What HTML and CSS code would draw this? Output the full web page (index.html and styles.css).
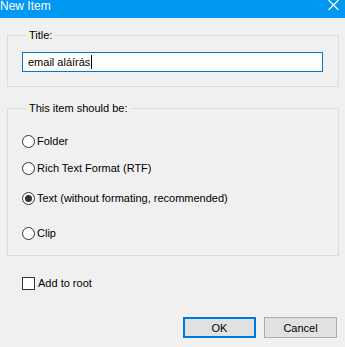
FILE: index.html
```html
<!DOCTYPE html>
<html lang="en">
<head>
    <meta charset="UTF-8">
    <meta name="viewport" content="width=device-width, initial-scale=1.0">
    <title>New Item</title>
    <link rel="stylesheet" href="styles.css">
</head>
<body>
    <div class="dialog">
        <div class="titlebar">
            <span class="title">New Item</span>
            <svg class="close" width="11" height="10" viewBox="0 0 11 10">
                <path d="M0.5 0 L10.5 10 M10.5 0 L0.5 10" stroke="#fff" stroke-width="1.2" fill="none"/>
            </svg>
        </div>

        <div class="content">
            <fieldset class="group group-title">
                <legend>Title:</legend>
                <div class="textbox">
                    <span>email aláírás</span><span class="caret"></span>
                </div>
            </fieldset>

            <fieldset class="group group-type">
                <legend>This item should be:</legend>
                <label class="option opt-folder"><span class="radio"></span>Folder</label>
                <label class="option opt-rtf"><span class="radio"></span>Rich Text Format (RTF)</label>
                <label class="option opt-text"><span class="radio checked"></span>Text (without formating, recommended)</label>
                <label class="option opt-clip"><span class="radio"></span>Clip</label>
            </fieldset>

            <label class="option add-root"><span class="checkbox"></span>Add to root</label>

            <div class="buttons">
                <button class="btn btn-default">OK</button>
                <button class="btn">Cancel</button>
            </div>
        </div>
    </div>
</body>
</html>
```

FILE: styles.css
```css
* {
    box-sizing: border-box;
    margin: 0;
    padding: 0;
}
html, body {
    width: 345px;
    height: 347px;
    overflow: hidden;
}
body {
    font-family: 'Liberation Sans', Arial, sans-serif;
    font-size: 11px;
    color: #000;
    background: #f0f0f0;
}
.titlebar {
    height: 18px;
    background: #0098f0;
    color: #fff;
    display: flex;
    justify-content: space-between;
    align-items: flex-start;
    padding-right: 6px;
}
.title {
    line-height: 13px;
    font-size: 12px;
}
.close {
    display: block;
}
.content {
    padding: 0 6px 0 7px;
}
.group {
    border: 1px solid #dcdcdc;
    width: 332px;
}
.group legend {
    margin-left: 4px;
    padding: 0 3px 0 3px;
    line-height: 14px;
}
.group-title {
    margin-top: 10px;
    padding: 10px 15px 14px 14px;
}
.textbox {
    height: 20px;
    width: 301px;
    border: 1px solid #0078d7;
    background: #fff;
    display: flex;
    align-items: center;
    padding-left: 5px;
    line-height: 14px;
}
.caret {
    width: 1px;
    height: 14px;
    background: #000;
    margin-left: 1px;
}
.group-type {
    margin-top: 14px;
    padding: 19px 14px 15px 14px;
}
.option {
    display: flex;
    align-items: center;
    height: 14px;
    line-height: 14px;
}
.opt-rtf {
    margin-top: 13px;
}
.opt-text {
    margin-top: 16px;
}
.opt-clip {
    margin-top: 21px;
}
.radio {
    width: 13px;
    height: 13px;
    border: 1px solid #333;
    border-radius: 50%;
    background: #fff;
    margin-right: 2px;
    display: flex;
    align-items: center;
    justify-content: center;
}
.radio.checked::after {
    content: "";
    width: 7px;
    height: 7px;
    border-radius: 50%;
    background: #333;
}
.checkbox {
    width: 13px;
    height: 13px;
    border: 1px solid #333;
    background: #fff;
    margin-right: 3px;
}
.add-root {
    margin-top: 20px;
    margin-left: 15px;
}
.buttons {
    display: flex;
    justify-content: flex-end;
    gap: 8px;
    margin-top: 27px;
    padding-right: 2px;
}
.btn {
    width: 73px;
    height: 21px;
    border: 1px solid #adadad;
    background: #e1e1e1;
    font-family: inherit;
    font-size: 11px;
    color: #000;
}
.btn-default {
    border: 2px solid #0078d7;
}
```
